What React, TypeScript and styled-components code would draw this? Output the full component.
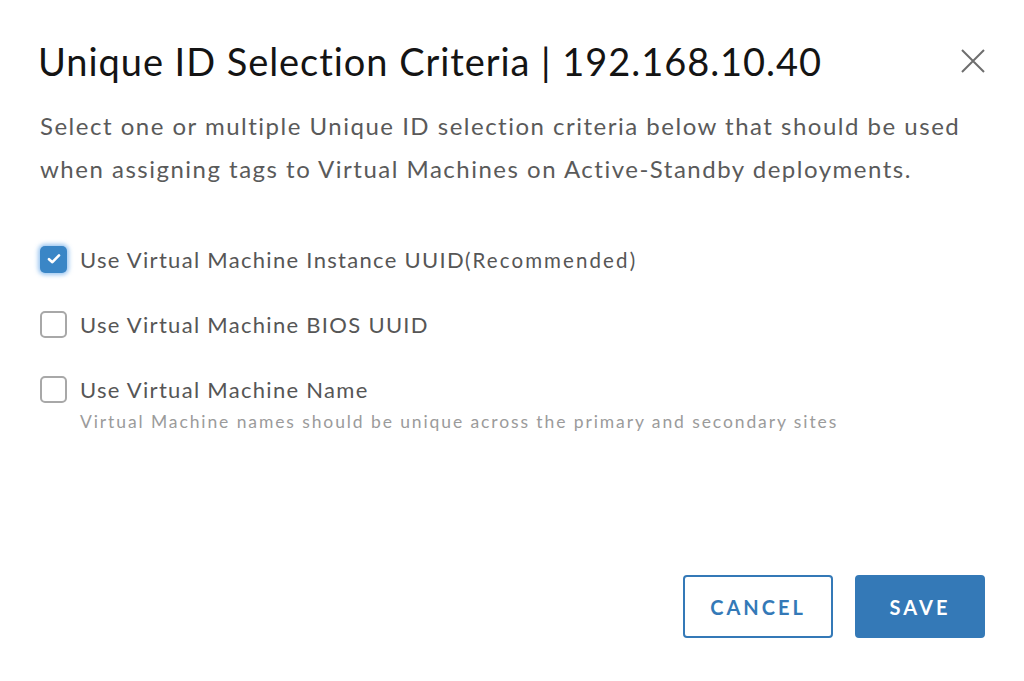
import styled, { createGlobalStyle } from "styled-components";

const GlobalStyle = createGlobalStyle`
  html, body {
    margin: 0;
    padding: 0;
    background: #ffffff;
  }
  body {
    font-family: Lato, "Open Sans", sans-serif;
  }
`;

const options = [
  { label: "Use Virtual Machine Instance UUID", note: "(Recommended)", checked: true },
  { label: "Use Virtual Machine BIOS UUID", checked: false },
  {
    label: "Use Virtual Machine Name",
    checked: false,
    help: "Virtual Machine names should be unique across the primary and secondary sites",
  },
];

export default function App() {
  return (
    <Modal>
      <GlobalStyle />
      <Header>
        <Title>Unique ID Selection Criteria | 192.168.10.40</Title>
        <Close aria-label="Close">
          <svg width="26" height="26" viewBox="0 0 26 26">
            <path d="M2 2 L24 24 M24 2 L2 24" stroke="#6e6e6e" strokeWidth="2" fill="none" />
          </svg>
        </Close>
      </Header>
      <Intro>
        Select one or multiple Unique ID selection criteria below that should be used
        when assigning tags to Virtual Machines on Active-Standby deployments.
      </Intro>
      <Options>
        {options.map((o) => (
          <Option key={o.label}>
            <Row>
              <Box $checked={o.checked}>
                {o.checked && (
                  <svg width="16" height="16" viewBox="0 0 16 16">
                    <path d="M3 8.2 L6.4 11.2 L13 4.4" stroke="#fff" strokeWidth="2.6" fill="none" strokeLinecap="round" strokeLinejoin="round" />
                  </svg>
                )}
              </Box>
              <Label>
                {o.label}
                {o.note && <Note>{o.note}</Note>}
              </Label>
            </Row>
            {o.help && <Help>{o.help}</Help>}
          </Option>
        ))}
      </Options>
      <Footer>
        <Button $primary={false}>Cancel</Button>
        <Button $primary>Save</Button>
      </Footer>
    </Modal>
  );
}

const Modal = styled.div`
  width: 1024px;
  height: 681px;
  box-sizing: border-box;
  padding: 38px 38px 0 38px;
  display: flex;
  flex-direction: column;
  color: #565656;
`;

const Header = styled.div`
  display: flex;
  align-items: center;
  justify-content: space-between;
`;

const Title = styled.h1`
  margin: 0;
  font-weight: 400;
  font-size: 38px;
  line-height: 46px;
  color: #141414;
  letter-spacing: 0.95px;
`;

const Close = styled.button`
  border: none;
  background: none;
  padding: 0;
  display: flex;
`;

const Intro = styled.p`
  margin: 20px 0 0 2px;
  font-size: 24px;
  line-height: 43px;
  letter-spacing: 1.5px;
  color: #5a5a5a;
  max-width: 950px;
`;

const Options = styled.div`
  margin-top: 54px;
  display: flex;
  flex-direction: column;
  gap: 35px;
`;

const Option = styled.div`
  display: flex;
  flex-direction: column;
`;

const Row = styled.div`
  display: flex;
  align-items: center;
  gap: 13px;
  height: 30px;
`;

const Box = styled.span<{ $checked: boolean }>`
  width: 27px;
  height: 27px;
  margin-left: 2px;
  box-sizing: border-box;
  border-radius: 5px;
  display: flex;
  align-items: center;
  justify-content: center;
  border: ${(p) => (p.$checked ? "none" : "2px solid #a8a8a8")};
  background: ${(p) => (p.$checked ? "#3a86c6" : "#fff")};
  box-shadow: ${(p) => (p.$checked ? "0 0 4px 2px rgba(90, 160, 230, 0.6)" : "none")};
`;

const Label = styled.span`
  font-size: 22px;
  letter-spacing: 1.3px;
  color: #565656;
`;

const Note = styled.span`
  font-size: 20.5px;
  letter-spacing: 2.1px;
`;

const Help = styled.div`
  margin: 7px 0 0 42px;
  font-size: 17.5px;
  letter-spacing: 1.9px;
  color: #9b9b9b;
`;

const Footer = styled.div`
  margin-top: auto;
  margin-bottom: 43px;
  display: flex;
  justify-content: flex-end;
  gap: 22px;
  padding-right: 1px;
`;

const Button = styled.button<{ $primary: boolean }>`
  height: 63px;
  padding: 0 ${(p) => (p.$primary ? "30px" : "22px")};
  min-width: ${(p) => (p.$primary ? "130px" : "150px")};
  box-sizing: border-box;
  border-radius: 4px;
  font-family: Lato, sans-serif;
  font-size: 20px;
  font-weight: 700;
  letter-spacing: 3px;
  text-transform: uppercase;
  border: 2px solid #3479b7;
  background: ${(p) => (p.$primary ? "#3479b7" : "#fff")};
  color: ${(p) => (p.$primary ? "#fff" : "#3479b7")};
`;
